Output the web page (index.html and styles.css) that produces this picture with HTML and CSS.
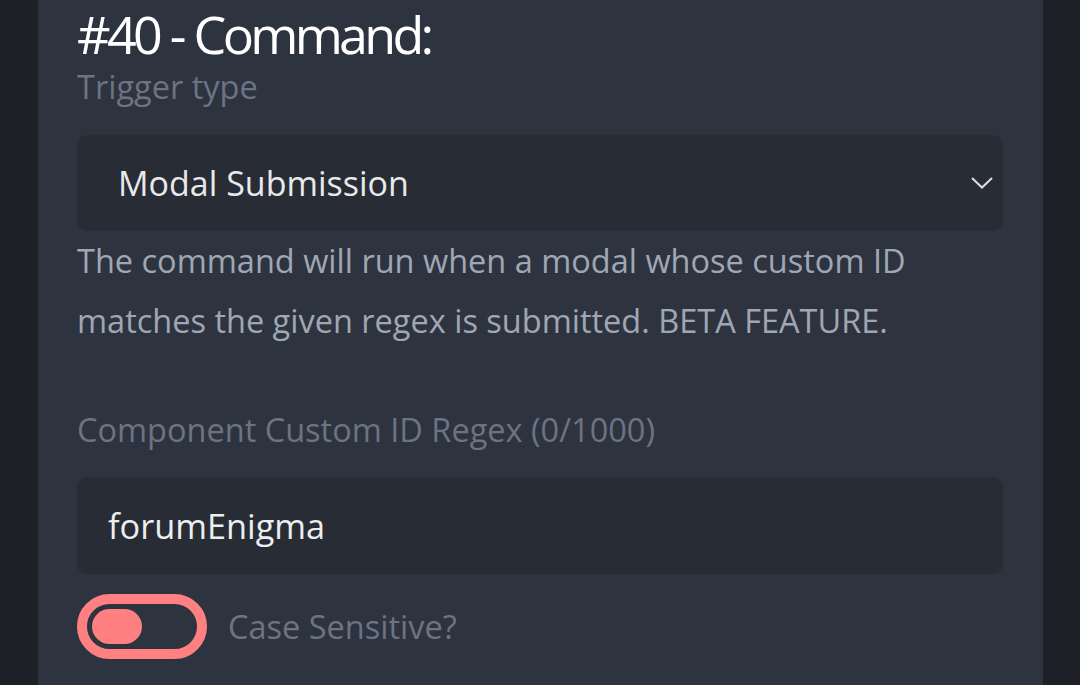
FILE: index.html
```html
<!DOCTYPE html>
<html lang="en">
<head>
<meta charset="utf-8">
<title>Command #40</title>
<link rel="stylesheet" href="styles.css">
</head>
<body>
<main class="panel">
  <h1 class="title">#40 - Command:</h1>
  <div class="field-label trigger-label">Trigger type</div>
  <div class="select">
    <span class="select-value">Modal Submission</span>
    <svg class="chevron" width="22" height="14" viewBox="0 0 22 14" aria-hidden="true">
      <polyline points="1,2 11,11.5 21,2" fill="none" stroke="#dcdde0" stroke-width="2"/>
    </svg>
  </div>
  <p class="desc">The command will run when a modal whose custom ID matches the given regex is submitted. BETA FEATURE.</p>
  <div class="field-label regex-label">Component Custom ID Regex (0/1000)</div>
  <div class="input">forumEnigma</div>
  <div class="toggle-row">
    <div class="toggle"><div class="knob"></div></div>
    <span class="toggle-label">Case Sensitive?</span>
  </div>
</main>
</body>
</html>
```

FILE: styles.css
```css
html, body {
  margin: 0;
  padding: 0;
  height: 100%;
}
body {
  background: #1e2028;
  font-family: "Open Sans", "Liberation Sans", sans-serif;
  overflow: hidden;
}
.panel {
  margin-left: 38px;
  width: 1005px;
  box-sizing: border-box;
  min-height: 100%;
  background: #2e343f;
  padding: 4px 40px 0 39px;
}
.title {
  margin: 0;
  font-size: 52px;
  line-height: 60px;
  font-weight: 400;
  letter-spacing: -3.7px;
  word-spacing: 1px;
  color: #ffffff;
}
.field-label {
  font-size: 32.5px;
  line-height: 40px;
  color: #6c7383;
}
.trigger-label {
  margin-top: 3px;
}
.select {
  margin-top: 28px;
  height: 96px;
  border-radius: 10px;
  background: #282c35;
  display: flex;
  align-items: center;
  justify-content: space-between;
  padding: 0 10px 0 41px;
}
.select-value {
  font-size: 34px;
  color: #e8e9eb;
}
.chevron {
  display: block;
}
.desc {
  margin: 0;
  font-size: 32.5px;
  line-height: 60px;
  color: #a0a7b4;
}
.regex-label {
  margin-top: 59px;
}
.input {
  margin-top: 27px;
  height: 97px;
  border-radius: 10px;
  background: #282c35;
  display: flex;
  align-items: center;
  padding: 0 31px;
  font-size: 34.3px;
  color: #eceef0;
}
.toggle-row {
  margin-top: 20px;
  display: flex;
  align-items: center;
  gap: 21px;
}
.toggle {
  box-sizing: border-box;
  width: 130px;
  height: 65px;
  border: 10px solid #ff8080;
  border-radius: 33px;
  padding: 5px;
  display: flex;
  align-items: center;
}
.knob {
  width: 50px;
  height: 35px;
  border-radius: 18px;
  background: #ff8080;
}
.toggle-label {
  font-size: 32.5px;
  color: #6c7383;
}
```
